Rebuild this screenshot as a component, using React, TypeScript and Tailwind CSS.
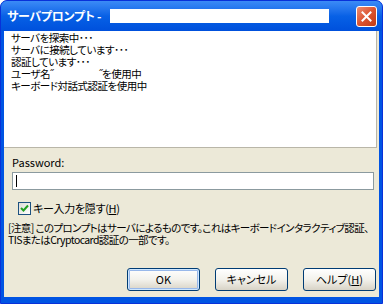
import React from "react";

const jp = "font-['Noto_Sans_CJK_JP',sans-serif]";

function XpButton({ label, def }: { label: React.ReactNode; def?: boolean }) {
  return (
    <button
      className={`w-[73px] h-[23px] rounded-[3px] border border-[#003c74] bg-gradient-to-b from-[#ffffff] via-[#f3f2ec] to-[#d8d3c6] text-[11px] leading-none text-black flex items-center justify-center ${
        def ? "shadow-[inset_0_0_0_1px_#cee7ff,inset_0_0_0_2px_#98b8ea]" : ""
      }`}
    >
      {label}
    </button>
  );
}

export default function App() {
  return (
    <div className={`w-[383px] h-[304px] bg-white ${jp}`}>
      <div className="w-full h-full flex flex-col rounded-t-[7px] bg-[#0054e3] border border-[#0831d9] overflow-hidden">
        {/* title bar */}
        <div className="h-[30px] shrink-0 flex items-center pl-[6px] pr-[5px] bg-gradient-to-b from-[#3b8bf6] via-[#0861e6] to-[#0050dc]">
          <span className="text-white font-bold text-[12px] tracking-tight [font-feature-settings:'palt']">
            サーバプロンプト -
          </span>
          <div className="ml-[9px] w-[219px] h-[14px] bg-white" />
          <div className="ml-auto w-[21px] h-[21px] rounded-[3px] border border-white bg-gradient-to-br from-[#ec8c70] via-[#dc5430] to-[#c23a12] flex items-center justify-center">
            <svg width="11" height="11" viewBox="0 0 11 11">
              <path d="M1.5 1.5 L9.5 9.5 M9.5 1.5 L1.5 9.5" stroke="white" strokeWidth="2" strokeLinecap="square" />
            </svg>
          </div>
        </div>
        {/* body */}
        <div className="flex-1 mx-[3px] mb-[6px] bg-[#ece9d8] flex flex-col">
          <div className="h-[117px] mr-[2px] bg-white border-b border-r border-[#b9b6a8] pl-[7px] pt-[1px] text-[10.5px] leading-[12px] tracking-[-0.5px] text-black whitespace-nowrap [font-feature-settings:'palt']">
            <div>サーバを探索中･･･</div>
            <div>サーバに接続しています･･･</div>
            <div>認証しています･･･</div>
            <div>ユーザ名˝<span className="inline-block w-[46px]" />˝を使用中</div>
            <div>キーボード対話式認証を使用中</div>
          </div>
          <div className="pl-[8px] pr-[5px] pt-[8px] flex flex-col">
            <div className="text-[11px] leading-[13px] text-black">Password:</div>
            <div className="mt-[3px] h-[18px] border border-[#8b9a9f] bg-white flex items-center pl-[3px]">
              <div className="w-px h-[12px] bg-black" />
            </div>
            <div className="mt-[12px] ml-[6px] flex items-center gap-[2px]">
              <div className="w-[13px] h-[13px] border border-[#1c5180] bg-gradient-to-br from-[#dcdcd7] to-white flex items-center justify-center">
                <svg width="9" height="9" viewBox="0 0 9 9">
                  <path d="M1 4 L3.5 6.5 L8 1.5" stroke="#21a121" strokeWidth="2" fill="none" />
                </svg>
              </div>
              <span className="text-[11px] leading-[13px] tracking-[-0.3px] text-black [font-feature-settings:'palt']">
                キー入力を隠す(<span className="underline">H</span>)
              </span>
            </div>
          </div>
          <div className="pl-[4px] pt-[7px] text-[10.5px] leading-[12px] text-black tracking-[-0.6px] whitespace-nowrap [font-feature-settings:'palt']">
            <div>[注意] このプロンプトはサーバによるものです。これはキーボードインタラクティブ認証、</div>
            <div>TISまたはCryptocard認証の一部です。</div>
          </div>
          <div className="mt-auto mb-[6px] pr-[3px] flex justify-end gap-[15px]">
            <XpButton label="OK" def />
            <XpButton label={<span className="[font-feature-settings:'palt']">キャンセル</span>} />
            <XpButton
              label={
                <span className="[font-feature-settings:'palt']">
                  ヘルプ(<span className="underline">H</span>)
                </span>
              }
            />
          </div>
        </div>
      </div>
    </div>
  );
}
